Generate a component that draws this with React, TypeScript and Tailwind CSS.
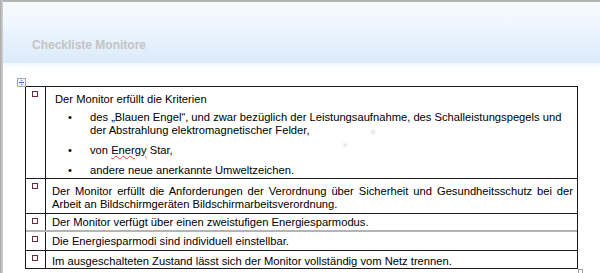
export default function App() {
  return (
    <div className="relative flex h-[273px] w-[600px] overflow-hidden bg-white font-['Liberation_Sans',Arial,sans-serif] text-[11.2px] leading-[13px] text-black">
      <div className="w-[3px] shrink-0 bg-linear-to-r from-[#a8a8a8] to-[#d4d4d4]" />
      <div className="flex flex-1 flex-col">
        <div className="h-[2px] shrink-0 bg-[#b3b3b3]" />
        <div className="flex h-[61px] shrink-0 items-end bg-linear-to-b from-[#f8fbfe] via-[#ebf4fe] to-[#dbeafa] pb-[11px] pl-[29px]">
          <h1 className="text-[12px] leading-[14px] font-bold text-[#c4c4c4]">Checkliste Monitore</h1>
        </div>
        <div className="h-[6px] shrink-0 bg-linear-to-b from-[#f1f7fd] to-white" />
        <div className="shrink-0 pl-[22px] pt-[17px]">
          <div className="relative w-[553px] border border-[#1a1a1a]">
            {/* table move handle */}
            <div className="absolute -left-[9px] -top-[9px] h-[9px] w-[9px] border border-[#a0a8b4] bg-[#f4f6f8]">
              <svg viewBox="0 0 7 7" className="h-[7px] w-[7px]">
                <path d="M1 3.5h5" stroke="#3a6fd0" strokeWidth="1" />
                <path d="M3.5 0.5 L2.5 1.8 H4.5 Z M3.5 6.5 L2.5 5.2 H4.5 Z" fill="#3a6fd0" />
              </svg>
            </div>
            {/* resize handle */}
            <div className="absolute -bottom-[6px] -right-[6px] h-[5px] w-[5px] border border-[#9c9c9c] bg-white" />

            <Row pt="pt-[6px]" pb="pb-[1px]">
              <div className="pl-[3px]">
                <p>Der Monitor erfüllt die Kriterien</p>
                <ul className="mt-[5px] flex flex-col gap-[7px] pl-[13px] pr-[2px]">
                  <Bullet>
                    des „Blauen Engel“, und zwar bezüglich der Leistungsaufnahme, des Schalleistungspegels und der Abstrahlung elektromagnetischer Felder,
                  </Bullet>
                  <Bullet>
                    von <span className="underline decoration-wavy decoration-[#e04040] decoration-1">Energy</span> Star,
                  </Bullet>
                  <Bullet>andere neue anerkannte Umweltzeichen.</Bullet>
                </ul>
              </div>
            </Row>
            <Row border="border-t border-t-[#1a1a1a]" pt="pt-[6px]" pb="pb-[2px]">
              <p className="text-justify">
                Der Monitor erfüllt die Anforderungen der Verordnung über Sicherheit und Gesundheitsschutz bei der Arbeit an Bildschirmgeräten Bildschirmarbeitsverordnung.
              </p>
            </Row>
            <Row border="border-t border-t-[#1a1a1a]" pt="pt-[2px]" pb="pb-[1px]">
              <p>Der Monitor verfügt über einen zweistufigen Energiesparmodus.</p>
            </Row>
            <Row border="border-t-2 border-t-[#b4b4b4]" pt="pt-[3px]" pb="pb-[2px]">
              <p>Die Energiesparmodi sind individuell einstellbar.</p>
            </Row>
            <Row border="border-t border-t-[#1a1a1a]" pt="pt-[4px]" pb="pb-0">
              <p>Im ausgeschalteten Zustand lässt sich der Monitor vollständig vom Netz trennen.</p>
            </Row>
          </div>
        </div>
      </div>
      {/* faint specks */}
      <div className="absolute left-[371px] top-[130px] h-[4px] w-[4px] rounded-full bg-[#dcdcdc] blur-[1px]" />
      <div className="absolute left-[343px] top-[143px] h-[4px] w-[4px] rounded-full bg-[#e0e0e0] blur-[1px]" />
    </div>
  );
}

function Row({
  children,
  border = "",
  pt,
  pb,
}: {
  children: React.ReactNode;
  border?: string;
  pt: string;
  pb: string;
}) {
  return (
    <div className={`flex ${border}`}>
      <div className="w-[20px] shrink-0 border-r border-r-[#1a1a1a] pl-[6px] pt-[4px]">
        <div className="h-[6px] w-[6px] border border-[#6b2a3c]" />
      </div>
      <div className={`flex-1 pl-[6px] pr-[4px] ${pt} ${pb}`}>{children}</div>
    </div>
  );
}

function Bullet({ children }: { children: React.ReactNode }) {
  return (
    <li className="flex">
      <span className="w-[22px] shrink-0">•</span>
      <span>{children}</span>
    </li>
  );
}
